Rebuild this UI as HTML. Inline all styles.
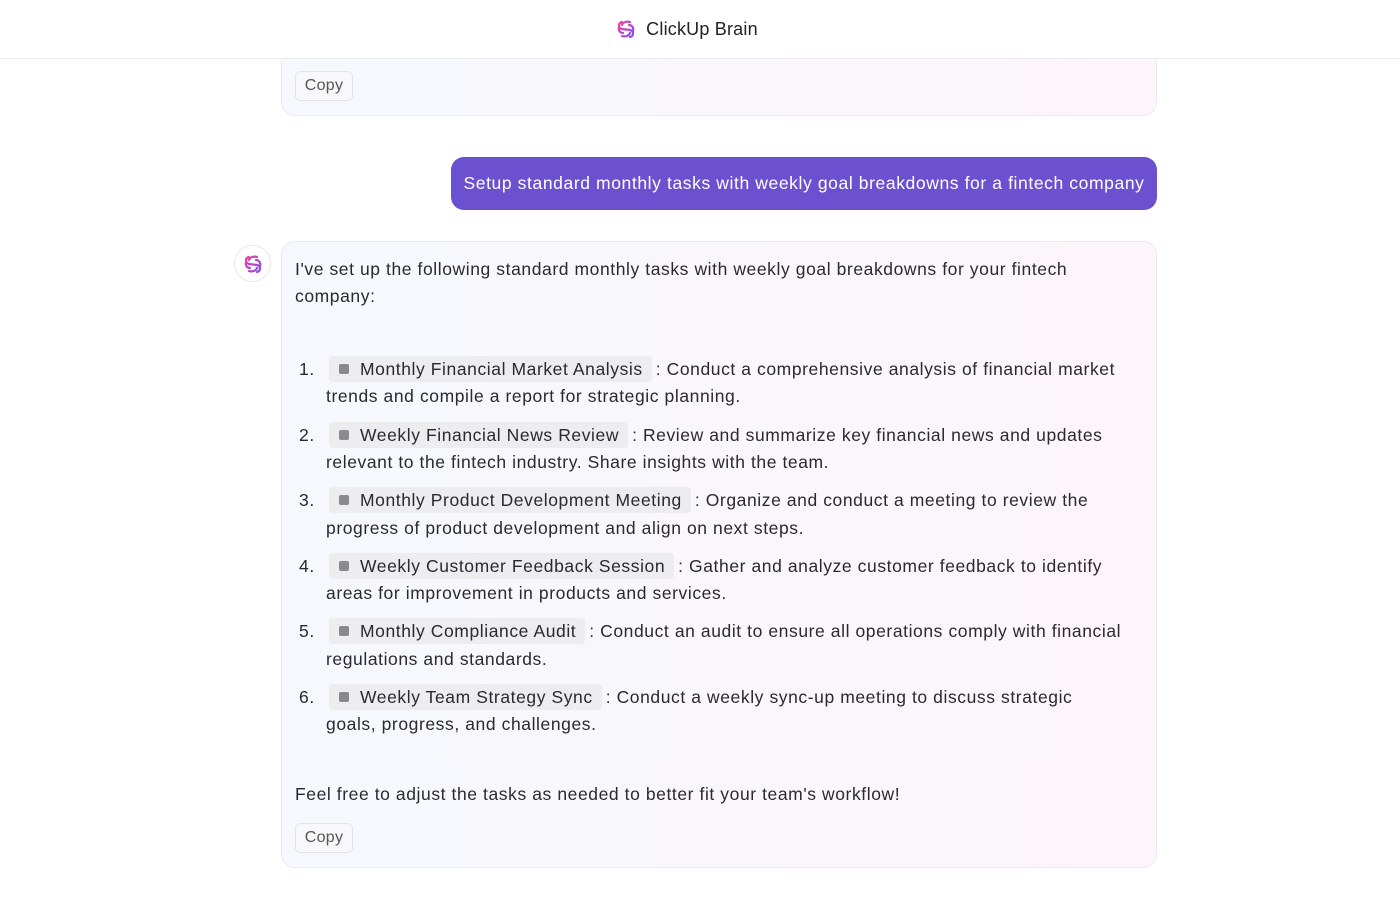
<!DOCTYPE html>
<html><head><meta charset="utf-8"><style>
*{box-sizing:border-box;margin:0;padding:0}
body{width:1400px;height:906px;background:#fff;font-family:"Liberation Sans",sans-serif;color:#2a2a2e;position:relative;overflow:hidden}
.hdr{position:absolute;left:0;top:0;width:1400px;height:59px;border-bottom:1px solid #ececef;display:flex;align-items:center;justify-content:center;font-size:18px;color:#222;background:#fff;z-index:5;letter-spacing:0.2px;padding-right:26px}
.hdr svg{margin-right:10px}
.card{position:absolute;left:281px;width:876px;border:1px solid #ebe9f3;border-radius:14px;background:linear-gradient(90deg,#f6f8fd,#fcf5fb)}
.copy{position:absolute;left:13px;width:58px;height:30px;border:1px solid #e3e3e8;border-radius:5px;background:#f8f8fa;font-size:16px;color:#555;display:flex;align-items:center;justify-content:center;letter-spacing:0.3px}
.user{position:absolute;left:451px;top:157px;width:706px;height:53px;background:#6b50d0;border-radius:13px;color:#fff;font-size:17.5px;letter-spacing:0.6px;display:flex;align-items:center;justify-content:center}
.av{position:absolute;left:234px;top:245px;width:37px;height:37px;border-radius:50%;border:1px solid #e8e8ec;background:#fff;display:flex;align-items:center;justify-content:center}
.t{position:absolute;font-size:17.5px;letter-spacing:0.58px;line-height:27px;white-space:nowrap}
.chip{display:inline-block;background:#ededef;border-radius:4px;padding:0 9px 0 10px;margin-right:4px;line-height:26px}
.chip i{display:inline-block;width:10px;height:10px;background:#8a8a8e;border-radius:2px;margin-right:11px;vertical-align:1px}
</style></head><body>
<svg width="0" height="0" style="position:absolute"><defs><linearGradient id="g" x1="0" y1="0" x2="1" y2="1"><stop offset="0" stop-color="#f040a0"/><stop offset="1" stop-color="#8a4cf0"/></linearGradient></defs></svg>
<div class="hdr"><svg width="20" height="20" viewBox="0 0 20 20"><g fill="none" stroke="url(#g)" stroke-width="2.2" stroke-linecap="round"><path d="M6 3c-4 1-4 6 0 7l8 1c4 1 4 6 0 7"/><path d="M14 3c-3-1-7 0-8 3M6 17c3 1 7 0 8-3"/><path d="M3 8c-1 3 1 6 4 6M17 12c1-3-1-6-4-6"/></g></svg>ClickUp Brain</div>
<div class="card" style="top:40px;height:76px;border-top:none;border-radius:0 0 14px 14px"><div class="copy" style="top:31px">Copy</div></div>
<div class="user">Setup standard monthly tasks with weekly goal breakdowns for a fintech company</div>
<div class="av"><svg width="20" height="20" viewBox="0 0 20 20"><g fill="none" stroke="url(#g)" stroke-width="2.2" stroke-linecap="round"><path d="M6 3c-4 1-4 6 0 7l8 1c4 1 4 6 0 7"/><path d="M14 3c-3-1-7 0-8 3M6 17c3 1 7 0 8-3"/><path d="M3 8c-1 3 1 6 4 6M17 12c1-3-1-6-4-6"/></g></svg></div>
<div class="card" style="top:241px;height:627px"><div class="copy" style="top:581px">Copy</div></div>
<div class="t" style="left:295px;top:256px">I've set up the following standard monthly tasks with weekly goal breakdowns for your fintech<br>company:</div>

<div class="t" style="left:299px;top:356px">1.</div>
<div class="t" style="left:329px;top:356px"><span class="chip"><i></i>Monthly Financial Market Analysis</span>: Conduct a comprehensive analysis of financial market</div>
<div class="t" style="left:326px;top:383px">trends and compile a report for strategic planning.</div>

<div class="t" style="left:299px;top:422px">2.</div>
<div class="t" style="left:329px;top:422px"><span class="chip"><i></i>Weekly Financial News Review</span>: Review and summarize key financial news and updates</div>
<div class="t" style="left:326px;top:449px">relevant to the fintech industry. Share insights with the team.</div>

<div class="t" style="left:299px;top:487px">3.</div>
<div class="t" style="left:329px;top:487px"><span class="chip"><i></i>Monthly Product Development Meeting</span>: Organize and conduct a meeting to review the</div>
<div class="t" style="left:326px;top:515px">progress of product development and align on next steps.</div>

<div class="t" style="left:299px;top:553px">4.</div>
<div class="t" style="left:329px;top:553px"><span class="chip"><i></i>Weekly Customer Feedback Session</span>: Gather and analyze customer feedback to identify</div>
<div class="t" style="left:326px;top:580px">areas for improvement in products and services.</div>

<div class="t" style="left:299px;top:618px">5.</div>
<div class="t" style="left:329px;top:618px"><span class="chip"><i></i>Monthly Compliance Audit</span>: Conduct an audit to ensure all operations comply with financial</div>
<div class="t" style="left:326px;top:646px">regulations and standards.</div>

<div class="t" style="left:299px;top:684px">6.</div>
<div class="t" style="left:329px;top:684px"><span class="chip"><i></i>Weekly Team Strategy Sync</span>: Conduct a weekly sync-up meeting to discuss strategic</div>
<div class="t" style="left:326px;top:711px">goals, progress, and challenges.</div>

<div class="t" style="left:295px;top:781px">Feel free to adjust the tasks as needed to better fit your team's workflow!</div>
</body></html>
